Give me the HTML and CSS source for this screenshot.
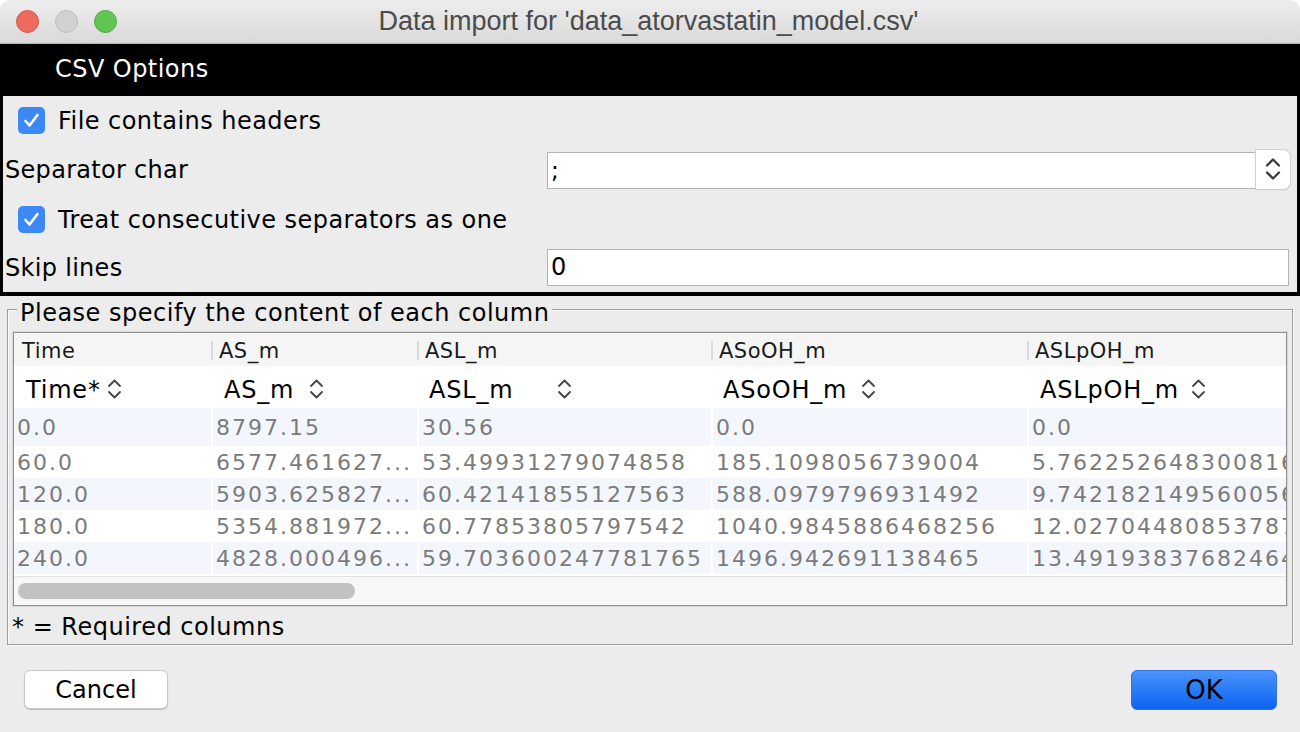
FILE: index.html
```html
<!DOCTYPE html>
<html>
<head>
<meta charset="utf-8">
<link rel="stylesheet" href="styles.css">
</head>
<body>
<div class="window">
  <div class="titlebar">
    <div class="lights">
      <span class="light red"></span>
      <span class="light grey"></span>
      <span class="light green"></span>
    </div>
    <div class="title">Data import for 'data_atorvastatin_model.csv'</div>
    <div class="spacer"></div>
  </div>

  <div class="options">
    <div class="options-head">CSV Options</div>
    <div class="options-body">
      <div class="row row1">
        <label class="check"><span class="box"><svg width="27" height="27" viewBox="0 0 27 27"><path d="M7.5 14 L11.5 18.5 L19.5 8" fill="none" stroke="#fff" stroke-width="2.6" stroke-linecap="round" stroke-linejoin="round"/></svg></span><span class="check-text">File contains headers</span></label>
      </div>
      <div class="row row2">
        <span class="lbl">Separator char</span>
        <div class="combo">
          <div class="combo-field">;</div>
          <div class="combo-btn"><svg width="16" height="26" viewBox="0 0 16 26"><path d="M2 9.5 L8 3.5 L14 9.5 M2 16.5 L8 22.5 L14 16.5" fill="none" stroke="#3a3a3a" stroke-width="2.3" stroke-linecap="round" stroke-linejoin="round"/></svg></div>
        </div>
      </div>
      <div class="row row3">
        <label class="check"><span class="box"><svg width="27" height="27" viewBox="0 0 27 27"><path d="M7.5 14 L11.5 18.5 L19.5 8" fill="none" stroke="#fff" stroke-width="2.6" stroke-linecap="round" stroke-linejoin="round"/></svg></span><span class="check-text">Treat consecutive separators as one</span></label>
      </div>
      <div class="row row4">
        <span class="lbl">Skip lines</span>
        <div class="textfield">0</div>
      </div>
    </div>
  </div>

  <div class="group">
    <div class="group-title">Please specify the content of each column</div>
    <div class="scrollpane">
      <div class="viewport">
        <div class="table">
          <div class="trow head">
            <div class="hcell c1">Time</div>
            <div class="hcell c2">AS_m</div>
            <div class="hcell c3">ASL_m</div>
            <div class="hcell c4">ASoOH_m</div>
            <div class="hcell c5">ASLpOH_m</div>
          </div>
          <div class="trow combos">
            <div class="ccell c1"><span class="clabel">Time*</span><svg class="chev" width="15" height="24" viewBox="0 0 15 24"><path d="M2 9 L7.5 3.5 L13 9 M2 15 L7.5 20.5 L13 15" fill="none" stroke="#444" stroke-width="1.8" stroke-linecap="round" stroke-linejoin="round"/></svg></div>
            <div class="ccell c2"><span class="clabel">AS_m</span><svg class="chev" width="15" height="24" viewBox="0 0 15 24"><path d="M2 9 L7.5 3.5 L13 9 M2 15 L7.5 20.5 L13 15" fill="none" stroke="#444" stroke-width="1.8" stroke-linecap="round" stroke-linejoin="round"/></svg></div>
            <div class="ccell c3"><span class="clabel">ASL_m</span><svg class="chev" width="15" height="24" viewBox="0 0 15 24"><path d="M2 9 L7.5 3.5 L13 9 M2 15 L7.5 20.5 L13 15" fill="none" stroke="#444" stroke-width="1.8" stroke-linecap="round" stroke-linejoin="round"/></svg></div>
            <div class="ccell c4"><span class="clabel">ASoOH_m</span><svg class="chev" width="15" height="24" viewBox="0 0 15 24"><path d="M2 9 L7.5 3.5 L13 9 M2 15 L7.5 20.5 L13 15" fill="none" stroke="#444" stroke-width="1.8" stroke-linecap="round" stroke-linejoin="round"/></svg></div>
            <div class="ccell c5"><span class="clabel">ASLpOH_m</span><svg class="chev" width="15" height="24" viewBox="0 0 15 24"><path d="M2 9 L7.5 3.5 L13 9 M2 15 L7.5 20.5 L13 15" fill="none" stroke="#444" stroke-width="1.8" stroke-linecap="round" stroke-linejoin="round"/></svg></div>
          </div>
          <div class="trow data first alt">
            <div class="dcell c1">0.0</div>
            <div class="dcell c2">8797.15</div>
            <div class="dcell c3">30.56</div>
            <div class="dcell c4">0.0</div>
            <div class="dcell c5">0.0</div>
          </div>
          <div class="trow data">
            <div class="dcell c1">60.0</div>
            <div class="dcell c2">6577.461627...</div>
            <div class="dcell c3">53.49931279074858</div>
            <div class="dcell c4">185.1098056739004</div>
            <div class="dcell c5">5.762252648300816</div>
          </div>
          <div class="trow data alt">
            <div class="dcell c1">120.0</div>
            <div class="dcell c2">5903.625827...</div>
            <div class="dcell c3">60.42141855127563</div>
            <div class="dcell c4">588.0979796931492</div>
            <div class="dcell c5">9.742182149560056</div>
          </div>
          <div class="trow data">
            <div class="dcell c1">180.0</div>
            <div class="dcell c2">5354.881972...</div>
            <div class="dcell c3">60.77853805797542</div>
            <div class="dcell c4">1040.9845886468256</div>
            <div class="dcell c5">12.027044808537871</div>
          </div>
          <div class="trow data alt">
            <div class="dcell c1">240.0</div>
            <div class="dcell c2">4828.000496...</div>
            <div class="dcell c3">59.703600247781765</div>
            <div class="dcell c4">1496.942691138465</div>
            <div class="dcell c5">13.491938376824642</div>
          </div>
        </div>
      </div>
      <div class="hscroll"><div class="thumb"></div></div>
    </div>
    <div class="required">* = Required columns</div>
  </div>

  <div class="buttons">
    <div class="btn cancel">Cancel</div>
    <div class="btn ok">OK</div>
  </div>
</div>
</body>
</html>
```

FILE: styles.css
```css
html, body {
  margin: 0;
  padding: 0;
  background: #ffffff;
}
body {
  width: 1300px;
  height: 732px;
  overflow: hidden;
  font-family: "DejaVu Sans", Verdana, sans-serif;
  color: #000;
}
.window {
  width: 1300px;
  height: 732px;
  background: #ececec;
  border-radius: 10px 10px 0 0;
  overflow: hidden;
  display: flex;
  flex-direction: column;
}

/* title bar */
.titlebar {
  height: 43px;
  border-bottom: 1px solid #b4b4b4;
  background: linear-gradient(#eeeeee, #d9d9d9);
  display: grid;
  grid-template-columns: 1fr auto 1fr;
  align-items: center;
}
.lights {
  display: flex;
  gap: 16px;
  padding-left: 16px;
}
.light {
  width: 23px;
  height: 23px;
  border-radius: 50%;
  box-sizing: border-box;
}
.light.red { background: #ee6a5e; border: 1px solid #d5574c; }
.light.grey { background: #d1d1d1; border: 1px solid #bcbcbc; }
.light.green { background: #61c554; border: 1px solid #4fab42; }
.title {
  font-family: "Liberation Sans", Arial, sans-serif;
  font-size: 27px;
  color: #4b4b4b;
  padding-right: 3px;
}

/* options panel */
.options {
  background: #000;
  padding: 0 3px 4px 3px;
}
.options-head {
  height: 52px;
  line-height: 50px;
  color: #fff;
  font-size: 24px;
  letter-spacing: 0.45px;
  padding-left: 52px;
}
.options-body {
  background: #ececec;
  padding-bottom: 2px;
}
.row {
  display: flex;
  align-items: center;
}
.row1 { height: 49px; }
.row2 { height: 49px; }
.row3 { height: 51px; }
.row4 { height: 45px; }
.check {
  display: flex;
  align-items: center;
  margin-left: 15px;
}
.box {
  width: 27px;
  height: 27px;
  border-radius: 5px;
  background: #3b88f6;
  display: flex;
}
.check-text {
  margin-left: 13px;
  font-size: 24px;
  letter-spacing: 0.45px;
}
.lbl {
  width: 542px;
  padding-left: 2px;
  font-size: 24px;
  letter-spacing: 0.3px;
}
.combo {
  display: flex;
  width: 743px;
  height: 40px;
}
.combo-field {
  flex: 1;
  background: #fff;
  border: 1px solid #b3b3b3;
  border-right: none;
  margin: 2px 0 0 0;
  height: 37px;
  box-sizing: border-box;
  font-size: 23px;
  line-height: 35px;
  padding-left: 3px;
}
.combo-btn {
  width: 34px;
  height: 39px;
  background: #fff;
  border-radius: 0 7px 7px 0;
  box-shadow: 0 0 0 1px #d0d0d0, 0 1px 1px #b0b0b0;
  display: flex;
  align-items: center;
  justify-content: center;
}
.textfield {
  width: 742px;
  height: 37px;
  box-sizing: border-box;
  background: #fff;
  border: 1px solid #b3b3b3;
  font-size: 24px;
  line-height: 35px;
  padding-left: 3px;
}

/* group */
.group {
  margin: 13px 7px 0 7px;
  border: 1px solid #9c9c9c;
  box-shadow: inset 1px 1px 0 #fafafa, 1px 1px 0 #fafafa;
  position: relative;
  height: 336px;
  box-sizing: border-box;
  padding: 22px 5px 0 5px;
}
.group-title {
  position: absolute;
  left: 9px;
  top: -9px;
  background: #ececec;
  padding: 0 3px;
  font-size: 24px;
  letter-spacing: 0.5px;
  line-height: 24px;
}
.scrollpane {
  border: 1px solid #8f8f8f;
  box-shadow: 0 0 0 1px #d8d8d8;
  background: #fff;
  height: 274px;
  box-sizing: border-box;
  display: flex;
  flex-direction: column;
  padding-top: 1px;
}
.viewport {
  height: 242px;
  overflow: hidden;
  border-bottom: 1px solid #e2e2e2;
}
.table {
  width: 1300px;
}
.trow {
  display: grid;
  grid-template-columns: 197px 206px 294px 316px 287px;
}
.head {
  height: 32px;
  background: #f5f5f5;
}
.hcell {
  font-size: 21px;
  letter-spacing: 0.5px;
  color: #1a1a1a;
  line-height: 34px;
  padding-left: 8px;
}
.head .hcell.c2, .head .hcell.c3, .head .hcell.c4, .head .hcell.c5 {
  background: linear-gradient(#dadada, #dadada) no-repeat 0 7px / 2px 19px;
}
.combos {
  height: 42px;
  background: #fff;
}
.ccell {
  display: flex;
  align-items: center;
  padding-left: 12px;
  padding-top: 5px;
  font-size: 24px;
  letter-spacing: 0.8px;
}
.ccell.c2, .ccell.c5 { padding-left: 13px; }
.clabel { display: inline-block; }
.c1 .clabel { width: 81px; }
.c2 .clabel { width: 85px; }
.c3 .clabel { width: 128px; }
.c4 .clabel { width: 138px; }
.c5 .clabel { width: 151px; }
.chev { display: block; margin-top: -2px; }
.data {
  height: 32px;
}
.data.first {
  height: 38px;
}
.dcell {
  font-size: 22px;
  color: #7b7b7b;
  letter-spacing: 2px;
  white-space: nowrap;
  overflow: hidden;
  display: flex;
  align-items: center;
  padding-left: 3px;
}
.dcell.c2, .dcell.c3, .dcell.c4, .dcell.c5 {
  margin-left: 2px;
}
.alt .dcell {
  background: #f3f7fd;
}
.hscroll {
  height: 27px;
  background: #f7f7f7;
  position: relative;
}
.thumb {
  position: absolute;
  left: 4px;
  top: 6px;
  width: 337px;
  height: 16px;
  border-radius: 8px;
  background: #c2c2c2;
}
.required {
  font-size: 24px;
  letter-spacing: 0.5px;
  line-height: 42px;
  margin-left: -1px;
}

/* buttons */
.buttons {
  display: flex;
  justify-content: space-between;
  padding: 25px 23px 0 24px;
}
.btn {
  height: 39px;
  box-sizing: border-box;
  border-radius: 6px;
  font-size: 24px;
  text-align: center;
  line-height: 38px;
}
.cancel {
  width: 144px;
  background: #fff;
  border: 1px solid #c6c6c6;
  box-shadow: 0 1px 1px #bdbdbd;
}
.ok {
  width: 146px;
  height: 40px;
  background: linear-gradient(#4b93fb, #0b63f0);
  border: 1px solid #2f71e6;
  font-size: 26px;
  line-height: 38px;
}
```
